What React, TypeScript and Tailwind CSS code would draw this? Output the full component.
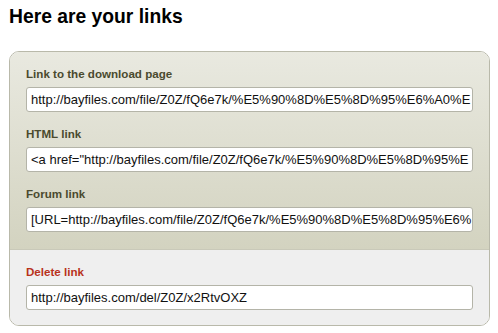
import React from "react";

const font = { fontFamily: '"Liberation Sans", Arial, sans-serif' };

function Field({ label, value, danger }: { label: string; value: string; danger?: boolean }) {
  return (
    <div className="flex flex-col">
      <div
        className={`text-[11.6px] font-bold leading-[15px] mb-[6px] ${danger ? "text-[#b8321c]" : "text-[#4a4a2e]"}`}
      >
        {label}
      </div>
      <div className="h-[25px] bg-white border border-[#b4b4a8] rounded-[3px] pl-[4px] overflow-hidden whitespace-nowrap text-[13px] leading-[23px] text-[#111]">
        {value}
      </div>
    </div>
  );
}

export default function App() {
  return (
    <div className="w-[498px] h-[333px] bg-white" style={font}>
      <div className="pl-[9px] pt-[6px] text-[19.3px] font-bold leading-[22px] text-black">Here are your links</div>
      <div className="ml-[9px] mt-[23px] w-[481px] border border-[#b9b9aa] rounded-[10px] overflow-hidden">
        <div className="bg-gradient-to-b from-[#e9e9e0] to-[#d3d3c0] px-[16px] pt-[14px] pb-[17px] flex flex-col gap-[14px] border-b border-[#c9c9b9]">
          <Field label="Link to the download page" value="http://bayfiles.com/file/Z0Z/fQ6e7k/%E5%90%8D%E5%8D%95%E6%A0%E" />
          <Field label="HTML link" value={'<a href="http://bayfiles.com/file/Z0Z/fQ6e7k/%E5%90%8D%E5%8D%95%E'} />
          <Field label="Forum link" value="[URL=http://bayfiles.com/file/Z0Z/fQ6e7k/%E5%90%8D%E5%8D%95%E6%" />
        </div>
        <div className="bg-[#efefef] px-[16px] pt-[14px] pb-[15px]">
          <Field label="Delete link" value="http://bayfiles.com/del/Z0Z/x2RtvOXZ" danger />
        </div>
      </div>
    </div>
  );
}
